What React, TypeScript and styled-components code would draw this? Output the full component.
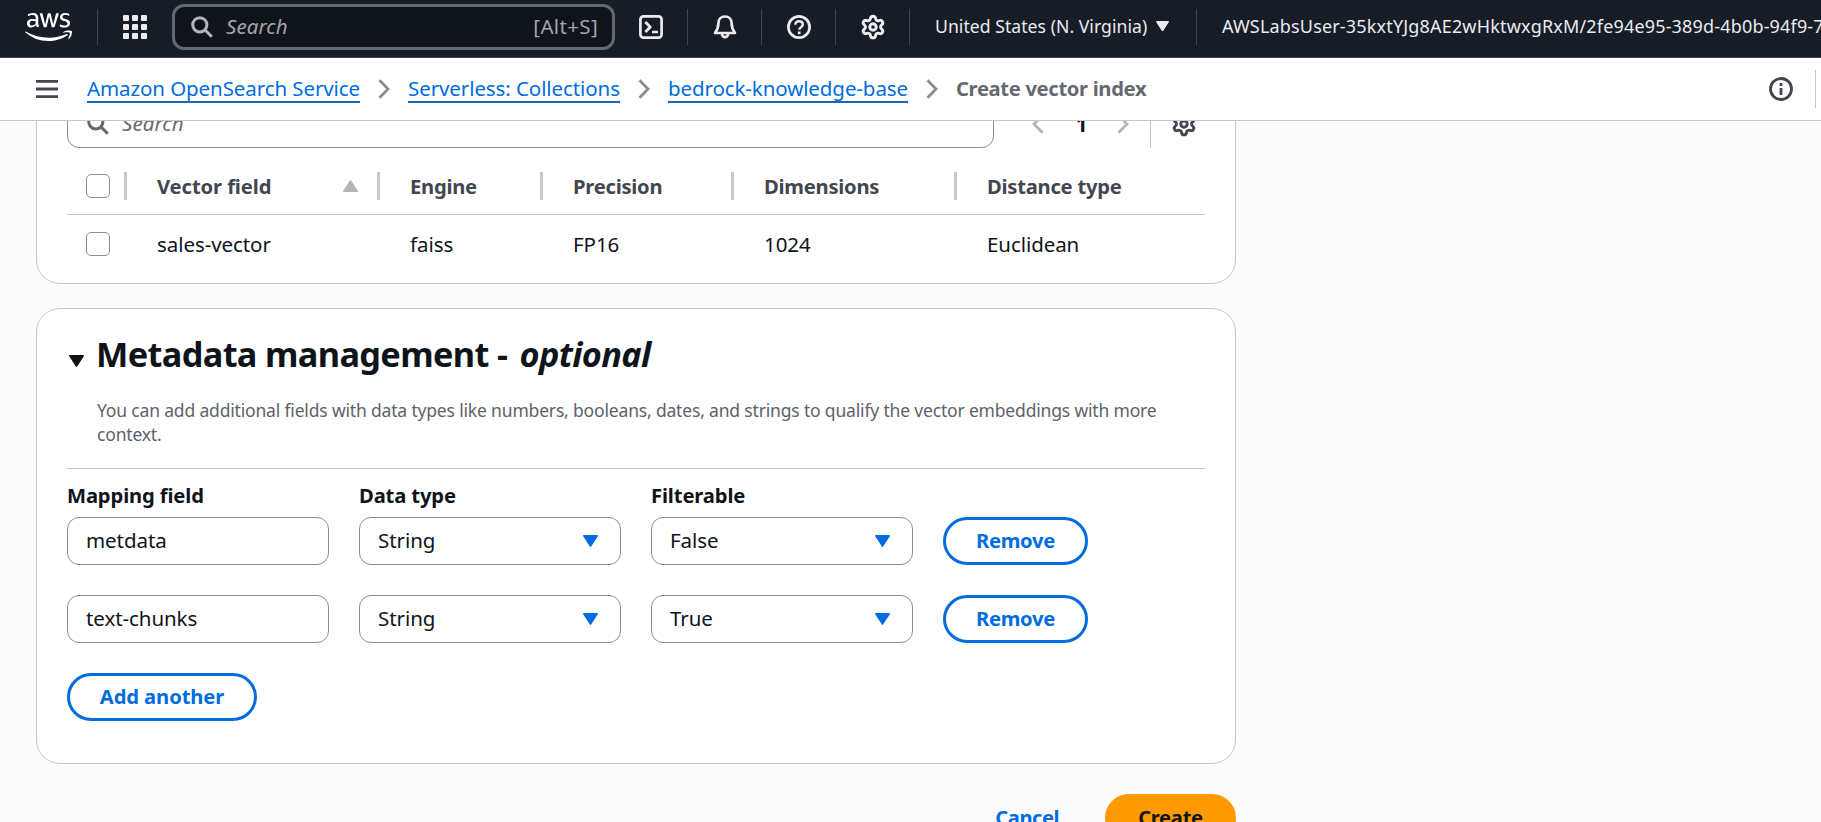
import React from 'react';
import styled, { createGlobalStyle } from 'styled-components';
import { Settings } from 'lucide-react';
import { FaAws } from 'react-icons/fa';

const GlobalStyle = createGlobalStyle`
  *, *::before, *::after { box-sizing: border-box; }
  body {
    margin: 0;
    background: #fcfcfd;
    color: #0f141a;
    font-family: 'Noto Sans', 'Open Sans', sans-serif;
    font-size: 20.5px;
    letter-spacing: -0.07px;
  }
`;

const Page = styled.div`
  display: flex;
  flex-direction: column;
  height: 822px;
  overflow: hidden;
`;

/* ---------- top navigation ---------- */

const TopNav = styled.header`
  display: flex;
  align-items: center;
  flex: none;
  height: 58px;
  padding: 0 0 4px 25px;
  overflow: hidden;
  background: #161d26;
  border-bottom: 1px solid #424650;
  color: #ebebf0;
  white-space: nowrap;
  > * { flex-shrink: 0; }
`;

const Logo = styled.div`
  display: flex;
  width: 48px;
  color: #fff;
  svg { width: 47px; height: 38px; flex: none; }
`;

const NavDivider = styled.div`
  flex: none;
  width: 1px;
  height: 36px;
  margin: 0 25px 0 24px;
  background: #424650;
`;

const NavIcon = styled.div`
  display: flex;
  align-items: center;
  justify-content: center;
  flex: none;
  width: 24px;
  height: 24px;
  svg { flex: none; }
`;

const NavSearch = styled.div`
  display: flex;
  align-items: center;
  flex: none;
  width: 443px;
  height: 46px;
  margin: 1px 24px 0 25px;
  padding: 0 14px 0 16px;
  background: #0f141a;
  border: 3px solid #656871;
  border-radius: 12px;
  color: #b4b4bb;
`;

const NavSearchHint = styled.span`
  flex: 1;
  margin-left: 13px;
  padding-bottom: 2px;
  color: #a4a4ad;
  font-style: italic;
  letter-spacing: 0.1px;
`;

const Shortcut = styled.span`
  padding-bottom: 2px;
  color: #a4a4ad;
  letter-spacing: 0.35px;
`;

const Region = styled.div`
  display: flex;
  align-items: center;
  gap: 9px;
  margin-right: 3px;
  padding-bottom: 1px;
  font-size: 17.6px;
  letter-spacing: 0.04px;
`;

const RegionName = styled.span`
  width: 212px;
`;

const Account = styled.div`
  padding-bottom: 1px;
  font-size: 18px;
  letter-spacing: 0.17px;
`;

/* ---------- breadcrumbs ---------- */

const CrumbBar = styled.nav`
  display: flex;
  align-items: center;
  flex: none;
  height: 63px;
  padding: 0 5px 0 36px;
  background: #fff;
  border-bottom: 1px solid #c6c6cd;
  color: #424650;
`;

const MenuIcon = styled.div`
  display: flex;
  margin-right: 29px;
`;

const Crumbs = styled.div`
  display: flex;
  align-items: center;
  flex: 1;
  gap: 18px;
  color: #8c8c94;
  letter-spacing: -0.09px;
`;

const CrumbLink = styled.a`
  height: 28px;
  border-bottom: 2px solid #1568b8;
  color: #006ce0;
  line-height: 26px;
  white-space: nowrap;
`;

const CrumbCurrent = styled.span`
  padding-bottom: 2px;
  color: #656871;
  font-size: 20.2px;
  font-weight: 700;
  letter-spacing: -0.34px;
`;

const CrumbDivider = styled.div`
  width: 1px;
  height: 38px;
  margin-left: 22px;
  background: #c6c6cd;
`;

/* ---------- content ---------- */

const Content = styled.main`
  flex: 1;
  min-height: 0;
  overflow: hidden;
  padding-left: 36px;
`;

const Card = styled.section`
  width: 1200px;
  background: #fff;
  border: 1px solid #c6c6cd;
  border-radius: 24px;
`;

const VectorCard = styled(Card)`
  margin: -60px 0 24px;
  padding: 38px 30px 10px;
`;

const TableTools = styled.div`
  display: flex;
  align-items: center;
  height: 48px;
`;

const TableSearch = styled.div`
  display: flex;
  align-items: center;
  gap: 13px;
  width: 927px;
  height: 48px;
  padding: 0 19px 2px;
  border: 1px solid #8c8c94;
  border-radius: 12px;
  color: #656871;
  font-style: italic;
  letter-spacing: 0.1px;
  svg { margin-top: 1px; }
`;

const Pager = styled.div`
  display: flex;
  align-items: center;
  justify-content: space-between;
  width: 97px;
  margin: 0 21px 0 38px;
  color: #b4b4bb;
`;

const PageNumber = styled.b`
  padding-left: 2px;
  color: #0f141a;
`;

const Preferences = styled.div`
  display: flex;
  align-items: center;
  height: 48px;
  padding-left: 20px;
  border-left: 1px solid #c6c6cd;
  color: #424650;
`;

const TableRow = styled.div<{ $head?: boolean }>`
  display: grid;
  grid-template-columns: 60px 253px 163px 191px 223px 247px;
  align-items: center;
  height: ${(p) => (p.$head ? 57 : 58)}px;
  margin-top: ${(p) => (p.$head ? 10 : 0)}px;
  border-bottom: ${(p) => (p.$head ? '1px solid #c6c6cd' : 'none')};
`;

const HeadCell = styled.div<{ $track?: number; $last?: boolean }>`
  display: flex;
  align-items: center;
  justify-content: space-between;
  height: 28px;
  padding: 0 19px 0 30px;
  border-right: ${(p) => (p.$last ? 'none' : '3px solid #c6c6cd')};
  color: #424650;
  font-size: 20.2px;
  font-weight: 700;
  letter-spacing: ${(p) => p.$track ?? -0.25}px;
`;

const CheckHead = styled.div`
  display: flex;
  align-items: center;
  height: 28px;
  padding-left: 19px;
  border-right: 3px solid #c6c6cd;
`;

const CheckCell = styled.div`
  display: flex;
  padding-left: 19px;
`;

const Checkbox = styled.div`
  width: 24px;
  height: 24px;
  background: #fff;
  border: 1.5px solid #8c8c94;
  border-radius: 5px;
`;

const Cell = styled.div`
  padding-left: 30px;
`;

const MetadataCard = styled(Card)`
  height: 456px;
  padding: 22px 30px 0;
`;

const SectionHeader = styled.div`
  display: grid;
  grid-template-columns: 30px 1fr;
  row-gap: 22px;
  padding-bottom: 22px;
  border-bottom: 1px solid #c6c6cd;
`;

const ExpandIcon = styled.div`
  display: flex;
  align-items: center;
  padding: 15px 0 0 2px;
`;

const Title = styled.h2`
  margin: 0 0 0 -1px;
  font-size: 34.3px;
  font-weight: 700;
  letter-spacing: -0.64px;
  line-height: 45px;
  i { margin-left: 4px; }
`;

const Description = styled.p`
  grid-column: 2;
  margin: 0;
  color: #5c626b;
  font-size: 17.5px;
  letter-spacing: -0.172px;
  line-height: 24px;
`;

const FieldGrid = styled.div`
  display: grid;
  grid-template-columns: 262px 262px 262px auto;
  justify-content: start;
  column-gap: 30px;
`;

const Labels = styled(FieldGrid)`
  margin: 11px 0 7px;
  font-size: 20.2px;
  font-weight: 700;
  letter-spacing: -0.13px;
  line-height: 30px;
`;

const FieldRow = styled(FieldGrid)`
  margin-bottom: 30px;
`;

const Field = styled.div`
  display: flex;
  align-items: center;
  justify-content: space-between;
  height: 48px;
  padding: 0 22.5px 2px 18px;
  background: #fff;
  border: 1px solid #8c8c94;
  border-radius: 12px;
  svg { margin-top: 2px; }
`;

const Button = styled.button<{ $width: number; $track?: number }>`
  width: ${(p) => p.$width}px;
  height: 48px;
  padding: 0 0 2px;
  background: #fff;
  border: 3px solid #006ce0;
  border-radius: 24px;
  color: #006ce0;
  font: 700 20.2px 'Noto Sans', sans-serif;
  letter-spacing: ${(p) => p.$track ?? -0.3}px;
`;

const PrimaryButton = styled(Button)`
  background: #ff9900;
  border-color: #ff9900;
  color: #0f141a;
`;

const CancelLink = styled.a`
  padding-bottom: 2px;
  color: #006ce0;
  font-size: 20.2px;
  font-weight: 700;
  letter-spacing: -0.5px;
`;

const Actions = styled.footer`
  display: flex;
  align-items: center;
  justify-content: flex-end;
  gap: 46px;
  width: 1200px;
  margin-top: 30px;
`;

/* ---------- icons ---------- */

const SearchIcon = () => (
  <svg width="22" height="22" viewBox="0 0 22 22" fill="none" stroke="currentColor" strokeWidth="3">
    <circle cx="8.8" cy="8.8" r="7.1" />
    <path d="M13.8 13.8l7 7" />
  </svg>
);

const Apps = () => (
  <svg width="24" height="24" viewBox="0 0 24 24" fill="currentColor">
    {[0, 9, 18].map((y) => [0, 9, 18].map((x) => <rect key={`${x}-${y}`} x={x} y={y} width="6" height="6" rx="1" />))}
  </svg>
);

const Terminal = () => (
  <svg width="24" height="24" viewBox="0 0 24 24" fill="none" stroke="currentColor" strokeWidth="2.7" strokeLinejoin="round">
    <rect x="1.4" y="1.4" width="21.2" height="21.2" rx="3" />
    <path d="M6.3 7l5 5-5 5M13 17h6" />
  </svg>
);

const Bell = () => (
  <svg width="24" height="24" viewBox="0 0 24 24" fill="none" stroke="currentColor" strokeWidth="2.7" strokeLinejoin="round">
    <path d="M12 1.5c-4 0-6.6 3-6.6 6.7 0 4.3-1 6.5-3.4 9.8h20c-2.4-3.3-3.4-5.5-3.4-9.8 0-3.7-2.6-6.7-6.6-6.7z" />
    <path d="M8.9 18.5a3.1 3.7 0 0 0 6.2 0" />
  </svg>
);

const Help = () => (
  <svg width="24" height="24" viewBox="0 0 24 24" fill="none" stroke="currentColor" strokeWidth="2.7">
    <circle cx="12" cy="12" r="10.6" />
    <path d="M8.3 9.8c0-2.2 1.6-3.6 3.8-3.6s3.7 1.3 3.7 3.3c0 2.7-3.6 2.7-3.6 5.3" strokeWidth="2.4" />
    <path d="M12.2 16.5v2.7" />
  </svg>
);

const Info = () => (
  <svg width="24" height="24" viewBox="0 0 24 24" fill="none" stroke="currentColor" strokeWidth="2.8">
    <circle cx="12" cy="12" r="10.5" />
    <path d="M12 11v7M12 6v3" />
  </svg>
);

const Burger = () => (
  <svg width="22" height="18" viewBox="0 0 22 18" stroke="currentColor" strokeWidth="2.8">
    <path d="M0 1.4h22M0 9h22M0 16.6h22" />
  </svg>
);

const Chevron = ({ left }: { left?: boolean }) => (
  <svg width="12" height="20" viewBox="0 0 12 20" fill="none" stroke="currentColor" strokeWidth="2.8">
    <path d={left ? 'M10.5 1.2L2 10l8.5 8.8' : 'M1.5 1.2L10 10l-8.5 8.8'} />
  </svg>
);

const Triangle = ({ size = 15, up, color }: { size?: number; up?: boolean; color: string }) => (
  <svg width={size} height={size * 0.8} viewBox="0 0 15 12" fill={color} stroke={color} strokeWidth="1.5" strokeLinejoin="round">
    <path d={up ? 'M7.5 .8L14.2 11.2H.8z' : 'M7.5 11.2L.8 .8h13.4z'} />
  </svg>
);

/* ---------- data ---------- */

const crumbs = ['Amazon OpenSearch Service', 'Serverless: Collections', 'bedrock-knowledge-base'];
const vector = ['sales-vector', 'faiss', 'FP16', '1024', 'Euclidean'];
const fields = [
  { name: 'metdata', type: 'String', filterable: 'False' },
  { name: 'text-chunks', type: 'String', filterable: 'True' },
];

export default function App() {
  return (
    <Page>
      <GlobalStyle />
      <TopNav>
        <Logo><FaAws /></Logo>
        <NavDivider />
        <NavIcon><Apps /></NavIcon>
        <NavSearch>
          <SearchIcon />
          <NavSearchHint>Search</NavSearchHint>
          <Shortcut>[Alt+S]</Shortcut>
        </NavSearch>
        <NavIcon><Terminal /></NavIcon>
        <NavDivider />
        <NavIcon><Bell /></NavIcon>
        <NavDivider />
        <NavIcon><Help /></NavIcon>
        <NavDivider />
        <NavIcon><Settings size={26} strokeWidth={2.7} /></NavIcon>
        <NavDivider />
        <Region>
          <RegionName>United States (N. Virginia)</RegionName>
          <Triangle size={13} color="#ebebf0" />
        </Region>
        <NavDivider />
        <Account>AWSLabsUser-35kxtYJg8AE2wHktwxgRxM/2fe94e95-389d-4b0b-94f9-7</Account>
      </TopNav>

      <CrumbBar>
        <MenuIcon><Burger /></MenuIcon>
        <Crumbs>
          {crumbs.map((c) => (
            <React.Fragment key={c}>
              <CrumbLink>{c}</CrumbLink>
              <Chevron />
            </React.Fragment>
          ))}
          <CrumbCurrent>Create vector index</CrumbCurrent>
        </Crumbs>
        <Info />
        <CrumbDivider />
      </CrumbBar>

      <Content>
        <VectorCard>
          <TableTools>
            <TableSearch><SearchIcon />Search</TableSearch>
            <Pager>
              <Chevron left />
              <PageNumber>1</PageNumber>
              <Chevron />
            </Pager>
            <Preferences><Settings size={26} strokeWidth={2.7} /></Preferences>
          </TableTools>
          <TableRow $head>
            <CheckHead><Checkbox /></CheckHead>
            <HeadCell $track={-0.1}>Vector field<Triangle up color="#b4b4bb" /></HeadCell>
            <HeadCell>Engine</HeadCell>
            <HeadCell>Precision</HeadCell>
            <HeadCell>Dimensions</HeadCell>
            <HeadCell $last>Distance type</HeadCell>
          </TableRow>
          <TableRow>
            <CheckCell><Checkbox /></CheckCell>
            {vector.map((v) => <Cell key={v}>{v}</Cell>)}
          </TableRow>
        </VectorCard>

        <MetadataCard>
          <SectionHeader>
            <ExpandIcon><Triangle color="#0f141a" /></ExpandIcon>
            <Title>Metadata management - <i>optional</i></Title>
            <Description>
              You can add additional fields with data types like numbers, booleans, dates, and strings to qualify the
              vector embeddings with more context.
            </Description>
          </SectionHeader>
          <Labels>
            <span>Mapping field</span>
            <span>Data type</span>
            <span>Filterable</span>
          </Labels>
          {fields.map((f) => (
            <FieldRow key={f.name}>
              <Field>{f.name}</Field>
              <Field>{f.type}<Triangle color="#006ce0" /></Field>
              <Field>{f.filterable}<Triangle color="#006ce0" /></Field>
              <Button $width={145}>Remove</Button>
            </FieldRow>
          ))}
          <Button $width={190} $track={-0.1}>Add another</Button>
        </MetadataCard>

        <Actions>
          <CancelLink>Cancel</CancelLink>
          <PrimaryButton $width={131}>Create</PrimaryButton>
        </Actions>
      </Content>
    </Page>
  );
}
